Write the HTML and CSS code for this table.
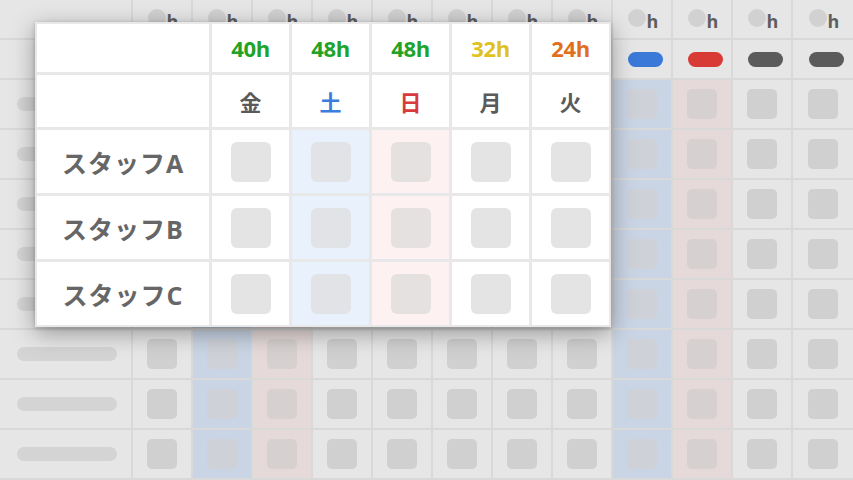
FILE: index.html
```html
<!DOCTYPE html>
<html lang="ja">
<head>
<meta charset="utf-8">
<title>シフト表</title>
<link rel="stylesheet" href="styles.css">
</head>
<body>
<div class="stage">
  <div class="bg">
    <!-- row 0 : hours header -->
    <div class="c"></div>
    <div class="c hd"><i class="dot"></i><b>h</b></div>
    <div class="c hd"><i class="dot"></i><b>h</b></div>
    <div class="c hd"><i class="dot"></i><b>h</b></div>
    <div class="c hd"><i class="dot"></i><b>h</b></div>
    <div class="c hd"><i class="dot"></i><b>h</b></div>
    <div class="c hd"><i class="dot"></i><b>h</b></div>
    <div class="c hd"><i class="dot"></i><b>h</b></div>
    <div class="c hd"><i class="dot"></i><b>h</b></div>
    <div class="c hd"><i class="dot"></i><b>h</b></div>
    <div class="c hd"><i class="dot"></i><b>h</b></div>
    <div class="c hd"><i class="dot"></i><b>h</b></div>
    <div class="c hd"><i class="dot"></i><b>h</b></div>
    <!-- row 1 : day pills -->
    <div class="c"></div>
    <div class="c"><i class="pill"></i></div>
    <div class="c"><i class="pill sat"></i></div>
    <div class="c"><i class="pill sun"></i></div>
    <div class="c"><i class="pill"></i></div>
    <div class="c"><i class="pill"></i></div>
    <div class="c"><i class="pill"></i></div>
    <div class="c"><i class="pill"></i></div>
    <div class="c"><i class="pill"></i></div>
    <div class="c"><i class="pill sat"></i></div>
    <div class="c"><i class="pill sun"></i></div>
    <div class="c"><i class="pill"></i></div>
    <div class="c"><i class="pill"></i></div>
    <!-- rows 2-9 -->
    <div class="c nm"><i class="bar"></i></div><div class="c"><i class="sq"></i></div><div class="c b"><i class="sq"></i></div><div class="c r"><i class="sq"></i></div><div class="c"><i class="sq"></i></div><div class="c"><i class="sq"></i></div><div class="c"><i class="sq"></i></div><div class="c"><i class="sq"></i></div><div class="c"><i class="sq"></i></div><div class="c b"><i class="sq"></i></div><div class="c r"><i class="sq"></i></div><div class="c"><i class="sq"></i></div><div class="c"><i class="sq"></i></div>
    <div class="c nm"><i class="bar"></i></div><div class="c"><i class="sq"></i></div><div class="c b"><i class="sq"></i></div><div class="c r"><i class="sq"></i></div><div class="c"><i class="sq"></i></div><div class="c"><i class="sq"></i></div><div class="c"><i class="sq"></i></div><div class="c"><i class="sq"></i></div><div class="c"><i class="sq"></i></div><div class="c b"><i class="sq"></i></div><div class="c r"><i class="sq"></i></div><div class="c"><i class="sq"></i></div><div class="c"><i class="sq"></i></div>
    <div class="c nm"><i class="bar"></i></div><div class="c"><i class="sq"></i></div><div class="c b"><i class="sq"></i></div><div class="c r"><i class="sq"></i></div><div class="c"><i class="sq"></i></div><div class="c"><i class="sq"></i></div><div class="c"><i class="sq"></i></div><div class="c"><i class="sq"></i></div><div class="c"><i class="sq"></i></div><div class="c b"><i class="sq"></i></div><div class="c r"><i class="sq"></i></div><div class="c"><i class="sq"></i></div><div class="c"><i class="sq"></i></div>
    <div class="c nm"><i class="bar"></i></div><div class="c"><i class="sq"></i></div><div class="c b"><i class="sq"></i></div><div class="c r"><i class="sq"></i></div><div class="c"><i class="sq"></i></div><div class="c"><i class="sq"></i></div><div class="c"><i class="sq"></i></div><div class="c"><i class="sq"></i></div><div class="c"><i class="sq"></i></div><div class="c b"><i class="sq"></i></div><div class="c r"><i class="sq"></i></div><div class="c"><i class="sq"></i></div><div class="c"><i class="sq"></i></div>
    <div class="c nm"><i class="bar"></i></div><div class="c"><i class="sq"></i></div><div class="c b"><i class="sq"></i></div><div class="c r"><i class="sq"></i></div><div class="c"><i class="sq"></i></div><div class="c"><i class="sq"></i></div><div class="c"><i class="sq"></i></div><div class="c"><i class="sq"></i></div><div class="c"><i class="sq"></i></div><div class="c b"><i class="sq"></i></div><div class="c r"><i class="sq"></i></div><div class="c"><i class="sq"></i></div><div class="c"><i class="sq"></i></div>
    <div class="c nm"><i class="bar"></i></div><div class="c"><i class="sq"></i></div><div class="c b"><i class="sq"></i></div><div class="c r"><i class="sq"></i></div><div class="c"><i class="sq"></i></div><div class="c"><i class="sq"></i></div><div class="c"><i class="sq"></i></div><div class="c"><i class="sq"></i></div><div class="c"><i class="sq"></i></div><div class="c b"><i class="sq"></i></div><div class="c r"><i class="sq"></i></div><div class="c"><i class="sq"></i></div><div class="c"><i class="sq"></i></div>
    <div class="c nm"><i class="bar"></i></div><div class="c"><i class="sq"></i></div><div class="c b"><i class="sq"></i></div><div class="c r"><i class="sq"></i></div><div class="c"><i class="sq"></i></div><div class="c"><i class="sq"></i></div><div class="c"><i class="sq"></i></div><div class="c"><i class="sq"></i></div><div class="c"><i class="sq"></i></div><div class="c b"><i class="sq"></i></div><div class="c r"><i class="sq"></i></div><div class="c"><i class="sq"></i></div><div class="c"><i class="sq"></i></div>
    <div class="c nm"><i class="bar"></i></div><div class="c"><i class="sq"></i></div><div class="c b"><i class="sq"></i></div><div class="c r"><i class="sq"></i></div><div class="c"><i class="sq"></i></div><div class="c"><i class="sq"></i></div><div class="c"><i class="sq"></i></div><div class="c"><i class="sq"></i></div><div class="c"><i class="sq"></i></div><div class="c b"><i class="sq"></i></div><div class="c r"><i class="sq"></i></div><div class="c"><i class="sq"></i></div><div class="c"><i class="sq"></i></div>
  </div>

  <div class="card">
    <div class="k"></div>
    <div class="k hrs green">40h</div>
    <div class="k hrs green">48h</div>
    <div class="k hrs green">48h</div>
    <div class="k hrs yellow">32h</div>
    <div class="k hrs orange">24h</div>

    <div class="k"></div>
    <div class="k day">金</div>
    <div class="k day blue">土</div>
    <div class="k day red">日</div>
    <div class="k day">月</div>
    <div class="k day">火</div>

    <div class="k staff">スタッフA</div>
    <div class="k"><i class="box"></i></div>
    <div class="k tb"><i class="box"></i></div>
    <div class="k tr"><i class="box"></i></div>
    <div class="k"><i class="box"></i></div>
    <div class="k"><i class="box"></i></div>

    <div class="k staff">スタッフB</div>
    <div class="k"><i class="box"></i></div>
    <div class="k tb"><i class="box"></i></div>
    <div class="k tr"><i class="box"></i></div>
    <div class="k"><i class="box"></i></div>
    <div class="k"><i class="box"></i></div>

    <div class="k staff">スタッフC</div>
    <div class="k"><i class="box"></i></div>
    <div class="k tb"><i class="box"></i></div>
    <div class="k tr"><i class="box"></i></div>
    <div class="k"><i class="box"></i></div>
    <div class="k"><i class="box"></i></div>
  </div>
</div>
</body>
</html>
```
FILE: styles.css
```css
* { box-sizing: border-box; margin: 0; padding: 0; }
html, body { width: 853px; height: 480px; overflow: hidden; background: #e6e6e6; }
body { font-family: "Open Sans", "Noto Sans CJK JP", sans-serif; }

.stage { position: relative; width: 853px; height: 480px; }

.bg {
  display: grid;
  grid-template-columns: 131px repeat(11, 58px) 60px;
  grid-template-rows: 38px 38px repeat(8, 48px);
  gap: 2px;
  background: #d9d9d9;
  width: 853px;
  height: 480px;
}
.c {
  background: #e6e6e6;
  display: flex;
  align-items: center;
  justify-content: center;
}
.c.b { background: #c9d4e4; }
.c.r { background: #e5d9d9; }
.c.nm { justify-content: flex-start; padding-left: 17px; }

.hd { gap: 1px; padding-left: 2px; }
.dot { display: block; width: 18px; height: 18px; border-radius: 50%; background: #d1d1d1; margin-top: -3px; }
.hd b { font-size: 18px; font-weight: 700; color: #5e5e5e; line-height: 1; margin-top: 4px; }

.pill { display: block; width: 35px; height: 15px; border-radius: 8px; background: #5b5b5b; margin-left: 6px; }
.pill.sat { background: #3b79d9; }
.pill.sun { background: #d83a36; }

.sq { display: block; width: 30px; height: 30px; border-radius: 5px; background: #d0d0d0; }
.c.b .sq { background: #ced2d8; }
.c.r .sq { background: #d6d0d0; }
.bar { display: block; width: 100px; height: 14px; border-radius: 7px; background: #d4d4d4; }

.card {
  position: absolute;
  left: 35px;
  top: 22px;
  display: grid;
  grid-template-columns: 172px repeat(5, 77px);
  grid-template-rows: 48px 52px 63px 63px 63px;
  gap: 3px;
  padding: 2px;
  background: #e8e8e8;
  box-shadow: 0 6px 22px rgba(0, 0, 0, 0.35), 0 1px 4px rgba(0, 0, 0, 0.2);
}
.k {
  background: #ffffff;
  display: flex;
  align-items: center;
  justify-content: center;
}
.k.tb { background: #e9f1fd; }
.k.tr { background: #fdf2f1; }

.hrs { font-size: 22px; font-weight: 700; letter-spacing: -0.3px; }
.green { color: #21a327; }
.yellow { color: #dfc122; }
.orange { color: #e0701e; }

.day { font-family: "Noto Sans CJK JP", sans-serif; font-size: 22px; font-weight: 700; color: #5a5a5a; }
.day.blue { color: #3b7ddb; }
.day.red { color: #d83b3b; }

.staff { font-family: "Open Sans", "Noto Sans CJK JP", sans-serif; font-size: 25px; font-weight: 700; color: #666666; letter-spacing: 1px; }

.box { display: block; width: 40px; height: 40px; border-radius: 6px; background: #e4e4e4; }
.k.tb .box { background: #e1e3e7; }
.k.tr .box { background: #e5e1e1; }
```
